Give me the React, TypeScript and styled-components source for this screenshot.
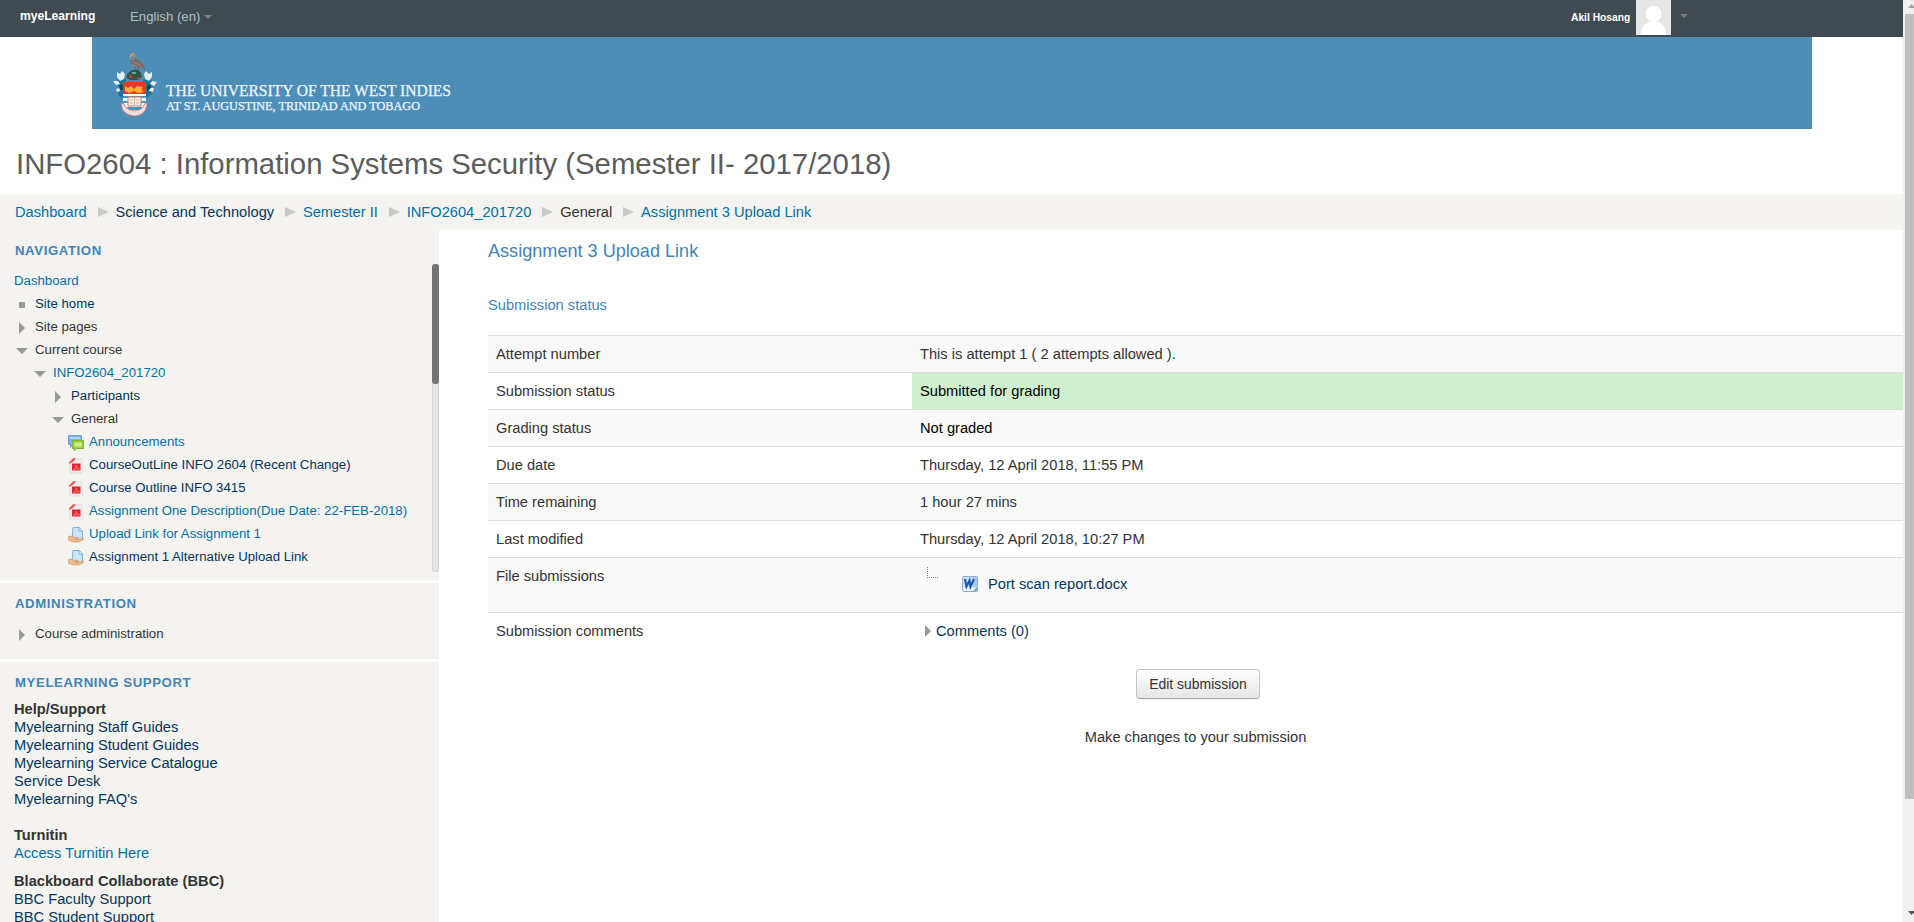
import React from "react";
import styled, { createGlobalStyle } from "styled-components";

const BRIGHT = "#0370a4";
const DARK = "#04355c";
const HEAD = "#4284b5";
const PANEL = "#f4f3ef";

const Global = createGlobalStyle`
  * { box-sizing: border-box; }
  html, body { margin: 0; padding: 0; height: 100%; overflow: hidden; background: #fff; }
  body { font: 14.67px/18px "Liberation Sans", Arial, sans-serif; color: #333; }
`;

const Window = styled.div`
  display: flex;
  height: 922px;
  overflow: hidden;
`;
const Page = styled.div`
  width: 1903px;
  height: 922px;
  overflow: hidden;
`;

const TopBar = styled.header`
  display: flex;
  align-items: flex-start;
  height: 37px;
  background: #3f4b51;
  color: #fff;
  padding-left: 20px;
`;
const Brand = styled.a`
  width: 110px;
  font-size: 12.1px;
  font-weight: bold;
  line-height: 32px;
`;
const Language = styled.div`
  display: flex;
  align-items: center;
  flex: 1;
  gap: 4px;
  height: 33px;
  font-size: 13.2px;
  color: #a9c0cc;
`;
const Caret = styled.i`
  width: 0;
  height: 0;
  border: 4px solid transparent;
  border-top-color: #7d7d7d;
  border-bottom: 0;
`;
const UserMenu = styled.div`
  display: flex;
  width: 332px;
  align-items: flex-start;
`;
const UserName = styled.span`
  width: 65px;
  font-size: 10.27px;
  font-weight: bold;
  line-height: 36px;
`;
const UserCaret = styled(Caret)`
  margin: 14px 0 0 9px;
`;

const Banner = styled.div`
  margin-left: 92px;
  width: 1720px;
  height: 92px;
  background: #4d8eb9;
`;
const Title = styled.h1`
  margin: 0;
  height: 65px;
  padding-left: 16px;
  font-size: 29.33px;
  font-weight: normal;
  line-height: 70px;
  color: #5c5c5c;
`;

const Crumbs = styled.nav`
  display: flex;
  height: 36px;
  padding-left: 15px;
  background: ${PANEL};
  line-height: 36px;
`;
const Link = styled.a<{ $tone?: "bright" | "dark" | "plain" }>`
  color: ${(p) => (p.$tone === "bright" ? BRIGHT : p.$tone === "plain" ? "#333" : DARK)};
  white-space: nowrap;
`;
const CrumbArrow = styled.i`
  width: 11px;
  height: 0;
  margin: 13px 6.8px 0 11px;
  border: 5px solid transparent;
  border-left: 11px solid #c9c9c9;
  border-right: 0;
`;

const Columns = styled.div`
  display: flex;
`;
const Sidebar = styled.aside`
  display: flex;
  flex-direction: column;
  gap: 3px;
  width: 439px;
`;
const Block = styled.section<{ $h: number }>`
  height: ${(p) => p.$h}px;
  background: ${PANEL};
`;
const BlockTitle = styled.h2`
  margin: 0;
  padding: 12px 0 0 15px;
  height: 34px;
  font-size: 13.2px;
  line-height: 18px;
  letter-spacing: 0.6px;
  color: ${HEAD};
`;
const NavScroller = styled.div`
  display: flex;
  justify-content: space-between;
  height: 308px;
`;
const Tree = styled.ul`
  list-style: none;
  margin: 0;
  padding: 5px 0 0;
  font-size: 13.23px;
`;
const TreeItem = styled.li<{ $x: number }>`
  display: flex;
  align-items: center;
  height: 23px;
  padding-left: ${(p) => p.$x}px;
  line-height: 23px;
`;
const Marker = styled.span<{ $w: number }>`
  display: flex;
  justify-content: center;
  width: ${(p) => p.$w}px;
  margin-right: ${(p) => (p.$w === 16 ? 5 : 7)}px;
  padding-top: 2px;
`;
const ArrowRight = styled.i`
  width: 0;
  height: 0;
  border: 6px solid transparent;
  border-left-color: #999;
  border-right: 0;
`;
const ArrowDown = styled.i`
  width: 0;
  height: 0;
  border: 6px solid transparent;
  border-top-color: #999;
  border-bottom: 0;
`;
const Bullet = styled.i`
  width: 6px;
  height: 6px;
  border-radius: 1px;
  background: #999;
`;
const NavTrack = styled.div`
  width: 7px;
  height: 308px;
  background: #e8e7e3;
  border: solid #d5d4d0;
  border-width: 0 1px 1px;
  border-radius: 4px;
`;
const NavThumb = styled.div`
  width: 7px;
  height: 120px;
  margin-left: -1px;
  border-radius: 3px;
  background: #757473;
`;
const AdminTree = styled(Tree)`
  padding-top: 5px;
`;
const SupportBody = styled.div`
  padding-top: 4px;
`;
const Support = styled.div<{ $gap?: number }>`
  display: flex;
  flex-direction: column;
  padding: 0 14px;
  margin-bottom: ${(p) => p.$gap ?? 0}px;
`;

const Main = styled.main`
  flex: 1;
  padding-left: 49px;
`;
const Heading = styled.h2`
  margin: 0;
  height: 54px;
  font-size: 18.1px;
  font-weight: normal;
  line-height: 42px;
  color: ${HEAD};
`;
const SubHeading = styled.h3`
  margin: 0;
  height: 51px;
  font-size: 14.67px;
  font-weight: normal;
  line-height: 42px;
  color: ${HEAD};
`;
const Row = styled.div<{ $odd?: boolean; $h?: number }>`
  display: flex;
  height: ${(p) => p.$h ?? 37}px;
  border-top: 1px solid #ddd;
  background: ${(p) => (p.$odd ? "#f9f9f9" : "#fff")};
  line-height: 36px;
`;
const Name = styled.div`
  width: 424px;
  padding-left: 8px;
`;
const Value = styled.div<{ $green?: boolean; $black?: boolean }>`
  display: flex;
  flex: 1;
  padding-left: 8px;
  background: ${(p) => (p.$green ? "#cfefcf" : "transparent")};
  color: ${(p) => (p.$green || p.$black ? "#000" : "#333")};
`;
const FileEntry = styled.div`
  display: flex;
  align-items: flex-start;
  padding: 9px 0 0 7px;
`;
const TreeElbow = styled.svg`
  margin-right: 24px;
`;
const FileLink = styled(Link)`
  margin-left: 10px;
  line-height: 34px;
`;
const FileIconWrap = styled.span`
  display: flex;
  padding-top: 9px;
`;
const CommentArrow = styled(ArrowRight)`
  margin: 12px 5px 0 5px;
`;
const Actions = styled.div`
  display: flex;
  flex-direction: column;
  align-items: center;
  padding-top: 19px;
`;
const EditButton = styled.button`
  width: 124px;
  height: 30px;
  margin: 0 0 29px 5px;
  padding: 0;
  border: 1px solid #c4c4c4;
  border-bottom-color: #a8a8a8;
  border-radius: 4px;
  background: linear-gradient(#fff, #e5e5e5);
  box-shadow: 0 1px 2px rgba(0, 0, 0, 0.06);
  font: 13.95px "Liberation Sans", Arial, sans-serif;
  color: #333;
`;

const PageTrack = styled.div`
  display: flex;
  flex-direction: column;
  justify-content: space-between;
  align-items: flex-end;
  width: 11px;
  height: 922px;
  background: #f0f0f0;
`;
const PageThumb = styled.div`
  width: 9px;
  height: 785px;
  margin-bottom: auto;
  background: #c0c0c0;
`;

const Avatar = () => (
  <svg width="35" height="35" viewBox="0 0 35 35">
    <rect width="35" height="35" fill="#e6e6e6" />
    <circle cx="17.500" cy="14" r="8" fill="#fff" />
    <path d="M5 35c0-8 5-14 12.500-14S30 27 30 35z" fill="#fff" />
  </svg>
);

const Logo = () => (
  <svg width="440" height="92" viewBox="92 37 440 92">
    <g>
      <path d="M131 61l2-4 3 2 4 2 4 4 1 4-5-1-5-1-4-3z" fill="#7b6a65" />
      <path d="M133 62l5 2 4 4M132 64l5 3" fill="none" stroke="#a8958c" strokeWidth=".8" />
      <path d="M132 60q4-3 2-6" fill="none" stroke="#a98a75" strokeWidth="1.600" />
      <path d="M135 54l-3-1-2 2-1 5 2-3 2-2z" fill="#d39a62" />
      <path d="M135 67v4M138 68v3" stroke="#6b5a4e" strokeWidth="1" />
      <path d="M128 73l4-3 6 0 3 3 1 4-4 3h-8l-4-3z" fill="#2f5548" />
      <path d="M129 75h3v3h-3zM137 77h3v2h-3z" fill="#c23a35" />
      <path d="M132 72h4v2h-4z" fill="#6da48e" />
      <path d="M126 79l-5-2-3 3 0 5 3 3-4 3 2 5 6 3zM143 79l5-2 4 3 1 5-3 3 3 3-3 5-6 3z" fill="#2a6f9b" />
      <path d="M117 72l3 2 2-3 3 3-1 5-4 2-3-4zM113 81l5 0 2 3-4 1zM152 72l-3 2-3-3-2 3 1 5 4 2 3-4zM157 82l-5-1-2 3 4 2zM116 89l4-1 1 3-4 1zM154 88l-4 0-1 3 4 1z" fill="#e5edf0" />
      <path d="M119 86l3-2 1 5-3 2zM150 84l-3 2 0 5 4-3z" fill="#183d55" />
      <path d="M123 82h23v18q0 8-11.500 13Q123 108 123 100z" fill="#fff" />
      <path d="M123 82h23v12h-23z" fill="#e43b24" />
      <path d="M125 86l3 2 3-2 3 3 3-3 6 1-2 3 3 2-6 1-4-2-5 2-4-2z" fill="#f3b52e" />
      <path d="M123 96h23v2h-23zM123 101h23v2h-23zM126 107h18l-4 3h-10z" fill="#3c9ac4" />
      <path d="M128 97h13v9h-13z" fill="#f6eee3" stroke="#d3765c" strokeWidth="1" />
      <path d="M134.500 97v9M130 100h3M136 100h3M130 103h3M136 103h3" stroke="#c98c75" strokeWidth=".7" />
      <path d="M121 103l3 1q2 6 10.500 7 8-1 10-7l3-1-2 7q-4 6-11 6t-12-6z" fill="#f0dcdc" stroke="#cf7077" strokeWidth=".8" />
    </g>
    <g fill="#f2f7fa" stroke="#f2f7fa" strokeWidth=".25" fontFamily="'Liberation Serif', serif">
      <text x="166" y="95.700" fontSize="17" textLength="285" lengthAdjust="spacingAndGlyphs">
        THE UNIVERSITY OF THE WEST INDIES
      </text>
      <text x="166" y="110" fontSize="13" textLength="254" lengthAdjust="spacingAndGlyphs">
        AT ST. AUGUSTINE, TRINIDAD AND TOBAGO
      </text>
    </g>
  </svg>
);

const ForumIcon = () => (
  <svg width="16" height="16" viewBox="0 0 16 16">
    <path d="M.5.5h13v9H4l-1.500 3V9.500h-2z" fill="#82b4f0" stroke="#6b9fe0" />
    <path d="M2 2h10v2H2z" fill="#b4d4fa" />
    <path d="M4.500 5.500h11v8h-7l-2 2.200v-2.200h-2z" fill="#a3d33c" stroke="#7fb52a" />
    <path d="M7 8h6v3H7z" fill="#cdec80" stroke="#e9f8c4" strokeWidth=".6" />
  </svg>
);
const PdfIcon = () => (
  <svg width="16" height="16" viewBox="0 0 16 16">
    <path d="M6 1h8v14H2V5z" fill="#eeeef1" stroke="#d8d8dc" strokeWidth=".8" />
    <path d="M1 4.500L5 .3h3L5.500 3.500 1.500 6z" fill="#f05a58" />
    <path d="M4 5.500h8.500v7H4z" fill="#e0262b" />
    <path d="M5.500 11.500q2.500-1.500 2.700-4.500.8 3 3.300 3.800-3-.5-6 .7z" fill="none" stroke="#f58a86" strokeWidth=".7" />
  </svg>
);
const AssignIcon = () => (
  <svg width="16" height="16" viewBox="0 0 16 16">
    <path d="M5 .5h6.500l3 3.500v9H4z" fill="#c9e6fb" stroke="#77aee3" />
    <path d="M11 .5V4h3.500" fill="#eef8ff" stroke="#77aee3" />
    <path d="M0 9.800q3-1.600 6 .5h4q1.500 1 0 1.700H7l4 .3 4-1.300q1.500.5 0 1.800L10.500 15H5L0 13z" fill="#ecbb8a" stroke="#c98f5c" strokeWidth=".5" />
  </svg>
);
const WordIcon = () => (
  <svg width="16" height="16" viewBox="0 0 16 16">
    <rect x=".5" y=".5" width="15" height="15" rx="1" fill="#cfe0f4" stroke="#8aaad0" />
    <path d="M11 1h4v9l-4 2z" fill="#a9c7ea" />
    <path d="M1 12l6-1 8 1v3H1z" fill="#eef5fc" />
    <path d="M3 3l1.500 7.500 3-6 1 6L12 3" fill="none" stroke="#1c5bab" strokeWidth="2.200" />
    <path d="M11 15l4-4v4z" fill="#82a6d4" />
  </svg>
);

type Tone = "bright" | "dark" | "plain";

const TREE: { x: number; w: number; icon: React.ReactNode; tone: Tone; text: string }[] = [
  { x: 16, w: 12, icon: <Bullet />, tone: "dark", text: "Site home" },
  { x: 16, w: 12, icon: <ArrowRight />, tone: "plain", text: "Site pages" },
  { x: 16, w: 12, icon: <ArrowDown />, tone: "plain", text: "Current course" },
  { x: 34, w: 12, icon: <ArrowDown />, tone: "bright", text: "INFO2604_201720" },
  { x: 52, w: 12, icon: <ArrowRight />, tone: "dark", text: "Participants" },
  { x: 52, w: 12, icon: <ArrowDown />, tone: "plain", text: "General" },
  { x: 68, w: 16, icon: <ForumIcon />, tone: "bright", text: "Announcements" },
  { x: 68, w: 16, icon: <PdfIcon />, tone: "dark", text: "CourseOutLine INFO 2604 (Recent Change)" },
  { x: 68, w: 16, icon: <PdfIcon />, tone: "dark", text: "Course Outline INFO 3415" },
  { x: 68, w: 16, icon: <PdfIcon />, tone: "bright", text: "Assignment One Description(Due Date: 22-FEB-2018)" },
  { x: 68, w: 16, icon: <AssignIcon />, tone: "bright", text: "Upload Link for Assignment 1" },
  { x: 68, w: 16, icon: <AssignIcon />, tone: "dark", text: "Assignment 1 Alternative Upload Link" },
];

const CRUMBS: [string, Tone][] = [
  ["Dashboard", "bright"],
  ["Science and Technology", "dark"],
  ["Semester II", "bright"],
  ["INFO2604_201720", "bright"],
  ["General", "plain"],
  ["Assignment 3 Upload Link", "bright"],
];

export default function App() {
  return (
    <Window>
      <Global />
      <Page>
        <TopBar>
          <Brand>myeLearning</Brand>
          <Language>
            English (en) <Caret />
          </Language>
          <UserMenu>
            <UserName>Akil Hosang</UserName>
            <Avatar />
            <UserCaret />
          </UserMenu>
        </TopBar>
        <Banner>
          <Logo />
        </Banner>
        <Title>INFO2604 : Information Systems Security (Semester II- 2017/2018)</Title>
        <Crumbs>
          {CRUMBS.map(([text, tone], i) => (
            <React.Fragment key={text}>
              {i > 0 && <CrumbArrow />}
              <Link $tone={tone}>{text}</Link>
            </React.Fragment>
          ))}
        </Crumbs>
        <Columns>
          <Sidebar>
            <Block $h={350}>
              <BlockTitle>NAVIGATION</BlockTitle>
              <NavScroller>
                <Tree>
                  <TreeItem $x={14}>
                    <Link $tone="bright">Dashboard</Link>
                  </TreeItem>
                  {TREE.map((t) => (
                    <TreeItem key={t.text} $x={t.x}>
                      <Marker $w={t.w}>{t.icon}</Marker>
                      <Link $tone={t.tone}>{t.text}</Link>
                    </TreeItem>
                  ))}
                </Tree>
                <NavTrack>
                  <NavThumb />
                </NavTrack>
              </NavScroller>
            </Block>
            <Block $h={76}>
              <BlockTitle>ADMINISTRATION</BlockTitle>
              <AdminTree>
                <TreeItem $x={16}>
                  <Marker $w={12}>
                    <ArrowRight />
                  </Marker>
                  <Link $tone="plain">Course administration</Link>
                </TreeItem>
              </AdminTree>
            </Block>
            <Block $h={300}>
              <BlockTitle>MYELEARNING SUPPORT</BlockTitle>
              <SupportBody>
                <Support $gap={18}>
                  <b>Help/Support</b>
                  <Link>Myelearning Staff Guides</Link>
                  <Link>Myelearning Student Guides</Link>
                  <Link>Myelearning Service Catalogue</Link>
                  <Link>Service Desk</Link>
                  <Link>Myelearning FAQ's</Link>
                </Support>
                <Support $gap={10}>
                  <b>Turnitin</b>
                  <Link $tone="bright">Access Turnitin Here</Link>
                </Support>
                <Support>
                  <b>Blackboard Collaborate (BBC)</b>
                  <Link>BBC Faculty Support</Link>
                  <Link>BBC Student Support</Link>
                </Support>
              </SupportBody>
            </Block>
          </Sidebar>
          <Main>
            <Heading>Assignment 3 Upload Link</Heading>
            <SubHeading>Submission status</SubHeading>
            <Row $odd>
              <Name>Attempt number</Name>
              <Value>This is attempt 1 ( 2 attempts allowed ).</Value>
            </Row>
            <Row>
              <Name>Submission status</Name>
              <Value $green>Submitted for grading</Value>
            </Row>
            <Row $odd>
              <Name>Grading status</Name>
              <Value $black>Not graded</Value>
            </Row>
            <Row>
              <Name>Due date</Name>
              <Value>Thursday, 12 April 2018, 11:55 PM</Value>
            </Row>
            <Row $odd>
              <Name>Time remaining</Name>
              <Value>1 hour 27 mins</Value>
            </Row>
            <Row>
              <Name>Last modified</Name>
              <Value>Thursday, 12 April 2018, 10:27 PM</Value>
            </Row>
            <Row $odd $h={55}>
              <Name>File submissions</Name>
              <Value>
                <FileEntry>
                  <TreeElbow width="11" height="11" viewBox="0 0 11 11" shapeRendering="crispEdges">
                    <path d="M.5 0v11M2 10.500h9" stroke="#808080" strokeDasharray="1 1" />
                  </TreeElbow>
                  <FileIconWrap>
                    <WordIcon />
                  </FileIconWrap>
                  <FileLink>Port scan report.docx</FileLink>
                </FileEntry>
              </Value>
            </Row>
            <Row $h={38}>
              <Name>Submission comments</Name>
              <Value>
                <CommentArrow />
                <Link>Comments (0)</Link>
              </Value>
            </Row>
            <Actions>
              <EditButton>Edit submission</EditButton>
              <span>Make changes to your submission</span>
            </Actions>
          </Main>
        </Columns>
      </Page>
      <PageTrack>
        <svg width="9" height="14" viewBox="0 0 9 14">
          <path d="M3 8l3.500-4L10 8z" fill="#a0a0a0" />
        </svg>
        <PageThumb />
        <svg width="9" height="14" viewBox="0 0 9 14">
          <path d="M3 3h7L6.500 7z" fill="#505050" />
        </svg>
      </PageTrack>
    </Window>
  );
}
